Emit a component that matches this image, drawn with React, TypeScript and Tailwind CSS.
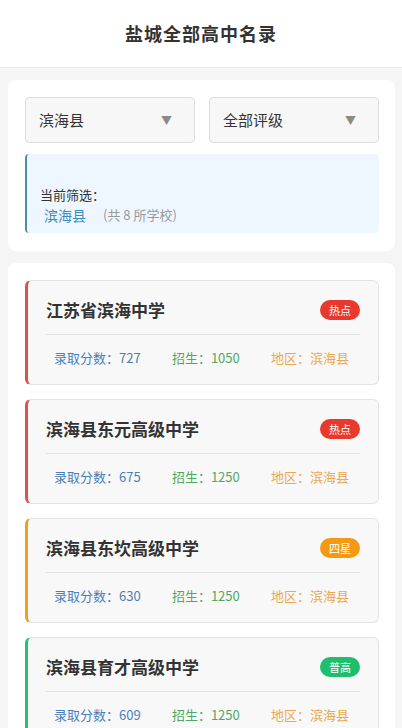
import clsx from 'clsx'

type Tone = 'red' | 'orange' | 'green'

const schools: Array<{ name: string; score: number; quota: number; area: string; tag: string; tone: Tone }> = [
  { name: '江苏省滨海中学', score: 727, quota: 1050, area: '滨海县', tag: '热点', tone: 'red' },
  { name: '滨海县东元高级中学', score: 675, quota: 1250, area: '滨海县', tag: '热点', tone: 'red' },
  { name: '滨海县东坎高级中学', score: 630, quota: 1250, area: '滨海县', tag: '四星', tone: 'orange' },
  { name: '滨海县育才高级中学', score: 609, quota: 1250, area: '滨海县', tag: '普高', tone: 'green' },
  { name: '滨海县八滩中学', score: 590, quota: 900, area: '滨海县', tag: '普高', tone: 'green' },
]

const borderTone: Record<Tone, string> = {
  red: 'border-l-[#d9534f]',
  orange: 'border-l-[#eba21f]',
  green: 'border-l-[#23c274]',
}

const badgeTone: Record<Tone, string> = {
  red: 'bg-[#e8392e]',
  orange: 'bg-[#f39a12]',
  green: 'bg-[#1dbf6c]',
}

export default function App() {
  return (
    <div className="min-h-screen bg-[#f5f5f5] font-['Noto_Sans_CJK_SC','Noto_Sans',sans-serif] text-[#333]">
      <header className="flex h-[68px] items-center justify-center border-b border-[#ececec] bg-white">
        <h1 className="text-[18px] font-bold tracking-[1px] text-[#333]">盐城全部高中名录</h1>
      </header>

      <div className="flex flex-col gap-3 pt-3 pr-[7px] pl-2">
        <section className="rounded-lg bg-white pt-[17px] pr-[16px] pb-[18px] pl-[17px]">
          <div className="grid grid-cols-2 gap-[14px]">
            <FakeSelect label="滨海县" />
            <FakeSelect label="全部评级" />
          </div>

          <div className="mt-[11px] rounded-[4px] border-l-2 border-l-[#4d8ea6] bg-[#eef7ff] pt-[31px] pb-[8px] pl-[13px]">
            <div className="text-[13px] leading-[20px] text-[#333]">当前筛选：</div>
            <div className="flex items-center gap-[17px] pl-1 text-[13px] leading-[20px]">
              <span className="text-[14px] text-[#3c8dbf]">滨海县</span>
              <span className="text-[#9a9a9a]">(共 8 所学校)</span>
            </div>
          </div>
        </section>

        <section className="flex flex-col gap-[14px] rounded-lg bg-white pt-[17px] pr-[16px] pb-4 pl-[17px]">
          {schools.map((s) => (
            <SchoolCard key={s.name} {...s} />
          ))}
        </section>
      </div>
    </div>
  )
}

function FakeSelect({ label }: { label: string }) {
  return (
    <div className="flex h-[46px] items-center justify-between rounded-[4px] border border-[#dedede] bg-[#f7f7f7] pr-[22px] pl-[13px]">
      <span className="text-[15px] text-[#333]">{label}</span>
      <span className="text-[11px] text-[#8a8a8a]">▼</span>
    </div>
  )
}

function SchoolCard({
  name,
  score,
  quota,
  area,
  tag,
  tone,
}: {
  name: string
  score: number
  quota: number
  area: string
  tag: string
  tone: Tone
}) {
  return (
    <div className={clsx('rounded-[6px] border border-l-[3px] border-[#e3e3e3] bg-[#f8f8f8] px-[18px] pt-[17px] pb-[15px]', borderTone[tone])}>
      <div className="flex items-center justify-between border-b border-[#e2e2e2] pb-3">
        <h2 className="text-[17px] leading-6 font-bold text-[#333]">{name}</h2>
        <span className={clsx('rounded-full px-[9px] text-[11px] leading-[20px] text-white', badgeTone[tone])}>{tag}</span>
      </div>
      <div className="flex justify-between pt-3 pr-[11px] pl-2 text-[13px] leading-[22px]">
        <span className="text-[#4a7fb8]">录取分数：{score}</span>
        <span className="text-[#4fa864]">招生：{quota}</span>
        <span className="text-[#e9a94f]">地区：{area}</span>
      </div>
    </div>
  )
}
